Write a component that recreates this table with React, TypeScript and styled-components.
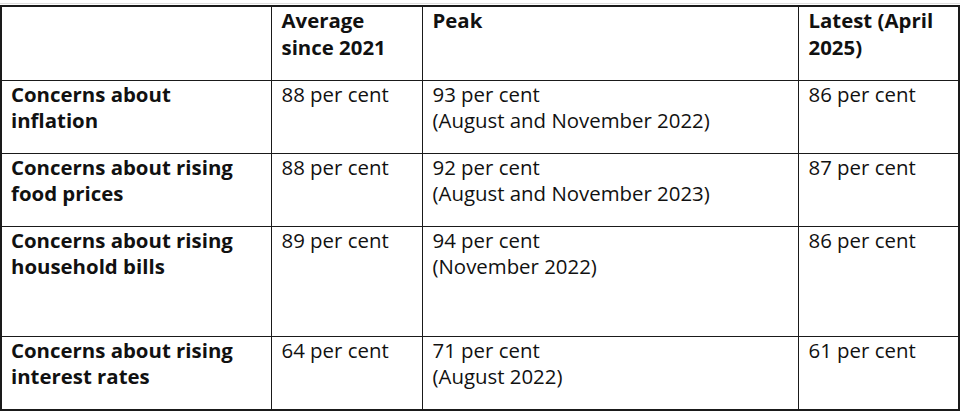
import styled, { createGlobalStyle } from "styled-components";

const GlobalStyle = createGlobalStyle`
  html, body {
    margin: 0;
    padding: 0;
    background: #ffffff;
  }
  body {
    font-family: "Open Sans", "Liberation Sans", sans-serif;
    color: #111111;
  }
`;

const ROWS = [
  {
    label: ["Concerns about", "inflation"],
    average: "88 per cent",
    peak: "93 per cent",
    peakWhen: "(August and November 2022)",
    latest: "86 per cent",
    height: 73,
  },
  {
    label: ["Concerns about rising", "food prices"],
    average: "88 per cent",
    peak: "92 per cent",
    peakWhen: "(August and November 2023)",
    latest: "87 per cent",
    height: 73,
  },
  {
    label: ["Concerns about rising", "household bills"],
    average: "89 per cent",
    peak: "94 per cent",
    peakWhen: "(November 2022)",
    latest: "86 per cent",
    height: 110,
  },
  {
    label: ["Concerns about rising", "interest rates"],
    average: "64 per cent",
    peak: "71 per cent",
    peakWhen: "(August 2022)",
    latest: "61 per cent",
    height: 74,
  },
];

const Page = styled.div`
  padding-top: 3px;
`;

const Rule = styled.div`
  height: 1px;
  background: #dedede;
  margin-bottom: 1px;
`;

const Table = styled.table`
  width: 958px;
  table-layout: fixed;
  border-collapse: collapse;
  border: 2px solid #1a1a1a;
  font-size: 20.4px;
  line-height: 26.5px;
`;

const HeadCell = styled.th`
  border: 1.5px solid #1a1a1a;
  padding: 0 8px 0 10px;
  text-align: left;
  vertical-align: top;
  font-weight: 700;
`;

const Cell = styled.td<{ $bold?: boolean }>`
  border: 1.5px solid #1a1a1a;
  padding: 0 8px 0 ${({ $bold }) => ($bold ? "9px" : "10px")};
  vertical-align: top;
  font-weight: ${({ $bold }) => ($bold ? 700 : 400)};
`;

const Row = styled.tr<{ $h: number }>`
  height: ${({ $h }) => $h}px;
`;

const Line = styled.div`
  white-space: nowrap;
`;

export default function App() {
  return (
    <Page>
      <GlobalStyle />
      <Rule />
      <Table>
        <colgroup>
          <col style={{ width: 270 }} />
          <col style={{ width: 151 }} />
          <col style={{ width: 376 }} />
          <col style={{ width: 161 }} />
        </colgroup>
        <thead>
          <Row $h={74}>
            <HeadCell></HeadCell>
            <HeadCell>
              <Line>Average</Line>
              <Line>since 2021</Line>
            </HeadCell>
            <HeadCell>Peak</HeadCell>
            <HeadCell>
              <Line>Latest (April</Line>
              <Line>2025)</Line>
            </HeadCell>
          </Row>
        </thead>
        <tbody>
          {ROWS.map((r) => (
            <Row key={r.label.join(" ")} $h={r.height}>
              <Cell $bold>
                {r.label.map((l) => (
                  <Line key={l}>{l}</Line>
                ))}
              </Cell>
              <Cell>{r.average}</Cell>
              <Cell>
                <Line>{r.peak}</Line>
                <Line>{r.peakWhen}</Line>
              </Cell>
              <Cell>{r.latest}</Cell>
            </Row>
          ))}
        </tbody>
      </Table>
    </Page>
  );
}
